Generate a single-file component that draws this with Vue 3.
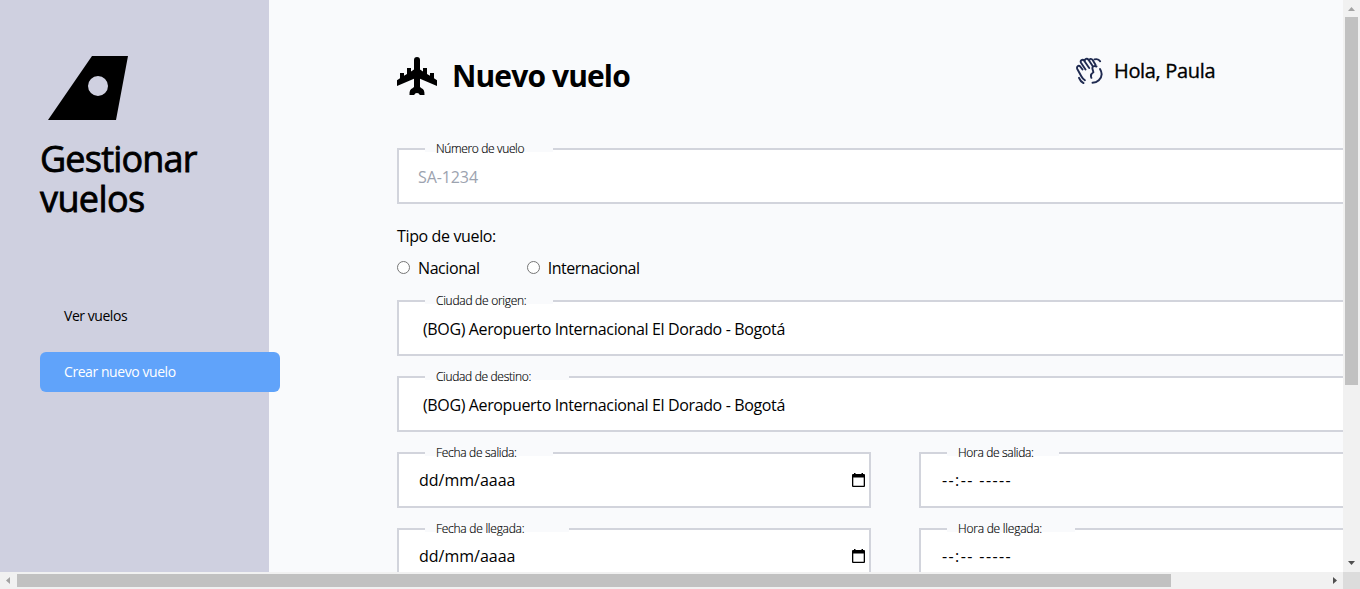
<script setup>
const options = ['Nacional', 'Internacional']
const rows = [
  [{ label: 'Ciudad de origen:', kind: 'select', value: '(BOG) Aeropuerto Internacional El Dorado - Bogotá', tag: 'origen' }],
  [{ label: 'Ciudad de destino:', kind: 'select', value: '(BOG) Aeropuerto Internacional El Dorado - Bogotá', tag: 'destino', wide: true }],
  [
    { label: 'Fecha de salida:', kind: 'date', value: 'dd/mm/aaaa', tag: 'fsalida' },
    { label: 'Hora de salida:', kind: 'time', value: '--:-- -----', tag: 'hsalida', mid: true },
  ],
  [
    { label: 'Fecha de llegada:', kind: 'date', value: 'dd/mm/aaaa', tag: 'fllegada', wide: true },
    { label: 'Hora de llegada:', kind: 'time', value: '--:-- -----', tag: 'hllegada', mid: true, wide: true },
  ],
]
</script>

<template>
  <div class="window">
    <div class="viewport">
      <aside class="sidebar">
        <svg class="logo" width="80" height="64" viewBox="0 0 80 64">
          <path fill-rule="evenodd" d="M44 0H80L68 64H0ZM50 20a10 10 0 1 0 0 20a10 10 0 1 0 0-20Z" />
        </svg>
        <h1><span class="t-gest">Gestionar</span><span class="t-vuelos">vuelos</span></h1>
        <nav>
          <a class="link"><span class="t-ver">Ver vuelos</span></a>
          <a class="link active"><span class="t-crear">Crear nuevo vuelo</span></a>
        </nav>
      </aside>
      <main>
        <header>
          <svg class="plane" width="40" height="38" viewBox="0 0 40 38">
            <path d="M20 0c-2 0-3 1.300-3 3v9.500l-3 1.900V11h-4v6l-3 1.700V16H3v5.300l-3 2V29l17-7.300V30l-1.500 1.300c-2 .6-3.200 2.800-3 6.700h4.700c.5-1.200 1.300-2 2.800-2s2.300.8 2.800 2h4.700c.2-3.900-1-6.100-3-6.700L23 30v-8.300L40 29v-5.700l-3-2V16h-4v2.700L30 17v-6h-4v3.400l-3-1.900V3c0-1.700-1-3-3-3Z" />
          </svg>
          <h2><span class="t-nuevo">Nuevo vuelo</span></h2>
          <div class="hello">
            <svg width="28" height="30" viewBox="0 0 28 30" fill="none" stroke="#1f2a50" stroke-width="1.900" stroke-linecap="round" stroke-linejoin="round">
              <path d="M9.500 12.500 5 5.800C3.800 3.500 6.600 1.600 8.200 3.800l5 7.200M8.800 4.200C8.500 1.800 11 .9 12.500 2.800l4.300 6.400M13.300 3.800C13.200 1.600 15.500 1.200 16.800 3.200l2.700 4.500M6.500 12.500 4.200 9.500C2.500 7.800.3 9.700 1.300 12l4 7.300c1 1.900 2 3 3.600 4M20.500 9.500c-2.600-1-4.600 0-4 2.400l.9 3.300c-2.200 1.400-3 3.400-2 5.600" />
              <path d="M24 12c2.600 4.300 2.200 8-1.200 11.200-1.900 1.800-4 2.500-6.300 2.500M18.500 2.400c2.400-.7 4.500 0 5.600 1.900M3 20.800c.9 2.400 2.400 4.100 4.500 5.300" />
            </svg>
            <span class="t-hola">Hola, Paula</span>
          </div>
        </header>
        <form>
          <div class="field">
            <label><span class="t-numero">Número de vuelo</span></label>
            <div class="value placeholder"><span class="t-sa">SA-1234</span></div>
          </div>
          <div class="kind">
            <div><span class="t-tipo">Tipo de vuelo:</span></div>
            <div class="radios">
              <div v-for="o in options" :key="o" class="radio">
                <i></i><span :class="'t-' + o.toLowerCase()">{{ o }}</span>
              </div>
            </div>
          </div>
          <div v-for="(row, i) in rows" :key="i" class="row">
            <div v-for="f in row" :key="f.label" class="field">
              <label :class="{ wide: f.wide, mid: f.mid }"><span :class="'t-' + f.tag">{{ f.label }}</span></label>
              <div class="value" :class="f.kind"><span :class="'v-' + f.kind">{{ f.value }}</span></div>
              <svg v-if="f.kind === 'date'" class="cal" width="13" height="14" viewBox="0 0 13 14">
                <path fill-rule="evenodd" d="M2 0h1.500v1h6V0H11v1h1q1 0 1 1v11q0 1-1 1H1q-1 0-1-1V2q0-1 1-1h1ZM1.300 4.500v8.200h10.400V4.500Z" />
              </svg>
            </div>
          </div>
        </form>
      </main>
    </div>
    <div class="vbar">
      <svg width="17" height="17"><path fill="#a3a3a3" d="M5 11h7L8.500 7Z" /></svg>
      <div class="vthumb"></div>
      <svg class="end" width="17" height="17"><path fill="#505050" d="M5 6h7L8.500 10Z" /></svg>
    </div>
    <div class="hbar">
      <svg width="17" height="17"><path fill="#a3a3a3" d="M10 5v7L6 8.500Z" /></svg>
      <div class="hthumb"></div>
      <svg class="end" width="17" height="17"><path fill="#505050" d="M7 5v7l4-3.500Z" /></svg>
    </div>
    <div class="corner"></div>
  </div>
</template>

<style>
body { margin: 0; overflow: hidden; }
</style>

<style scoped>
* { box-sizing: border-box; }
.window {
  display: grid;
  grid-template: 572px 17px / 1343px 17px;
  width: 1360px;
  height: 589px;
  font: 16px/24px "Open Sans", "Noto Sans", sans-serif;
  color: #000;
}
.window span { white-space: nowrap; }
.viewport { display: flex; overflow: hidden; background: #f9fafc; }
.sidebar { flex: none; width: 269px; padding: 56px 0 0 40px; background: #cfd0e0; }
.logo { display: block; margin-left: 8px; }
h1 { margin: 19px 0 0; font-size: 36px; line-height: 40px; font-weight: 400; -webkit-text-stroke: 0.8px #000; }
h1 span { display: block; line-height: 40px; }
.t-gest { letter-spacing: -0.8px; }
.t-vuelos { letter-spacing: -0.6px; }
nav { display: flex; flex-direction: column; gap: 16px; margin-top: 77px; }
.link { display: flex; align-items: center; width: 240px; height: 40px; padding-left: 24px; border-radius: 6px; font-size: 14px; }
.t-ver { letter-spacing: -0.45px; }
.t-crear { letter-spacing: -0.43px; }
.active { background: #60a3fa; color: #fff; }
main { flex: none; width: 1252px; padding: 56px 128px 0; }
header { display: flex; align-items: center; height: 40px; }
.plane { flex: none; }
h2 { width: 663px; margin: 0 0 0 15px; font-size: 30px; line-height: 36px; font-weight: 700; letter-spacing: -0.88px; }
.hello { display: flex; align-items: center; gap: 10px; margin: -9px 0 0 -39px; font-size: 20px; line-height: 28px; font-weight: 400; letter-spacing: -0.33px; -webkit-text-stroke: 0.35px #000; }
.hello span { padding-bottom: 2px; }
form { display: flex; flex-direction: column; gap: 20px; margin-top: 52px; }
.row { display: flex; gap: 48px; }
.field { position: relative; flex: 1 1 0; height: 56px; border: 2px solid #d2d4dc; background: #fff; }
form > .field { flex: none; }
label { position: absolute; left: 26px; top: -10px; width: 128px; height: 12px; padding-left: 11px; background: #f9fafc; font-size: 12px; line-height: 18px; font-weight: 300; -webkit-text-stroke: 0.15px #000; }
label.mid { width: 112px; }
label.wide { width: 144px; }
label.mid.wide { width: 128px; }
.t-numero { letter-spacing: -0.36px; }
.t-origen { letter-spacing: -0.27px; }
.t-destino { letter-spacing: -0.33px; }
.t-fsalida { letter-spacing: -0.3px; }
.t-fllegada { letter-spacing: -0.26px; }
.t-hsalida { letter-spacing: -0.32px; }
.t-hllegada { letter-spacing: -0.23px; }
.value { display: flex; align-items: center; height: 52px; padding: 2px 0 0 20px; }
.placeholder { padding-left: 19px; color: #9ca3af; letter-spacing: -0.1px; }
.select { padding-left: 24px; letter-spacing: -0.365px; }
.date, .time { padding-top: 0; }
.time { padding-left: 21px; letter-spacing: 1.4px; }
.cal { position: absolute; right: 4px; top: 19px; }
.kind { height: 56px; }
.t-tipo { letter-spacing: -0.36px; }
.radios { display: flex; gap: 47px; margin-top: 8px; }
.radio { display: flex; align-items: center; gap: 8px; }
.t-nacional { letter-spacing: -0.42px; }
.t-internacional { letter-spacing: -0.5px; }
.radio i { width: 13px; height: 13px; margin-top: -2px; border: 1px solid #767676; border-radius: 50%; background: #fff; }
.vbar { display: flex; flex-direction: column; align-items: center; background: #f1f1f1; }
.vbar svg, .hbar svg { flex: none; }
.vthumb { width: 13px; height: 368px; background: #c1c1c1; }
.vbar .end { margin-top: auto; }
.hbar { display: flex; align-items: center; background: #f1f1f1; }
.hthumb { width: 1154px; height: 13px; background: #c1c1c1; }
.hbar .end { margin-left: auto; }
.corner { background: #dcdcdc; }
</style>
